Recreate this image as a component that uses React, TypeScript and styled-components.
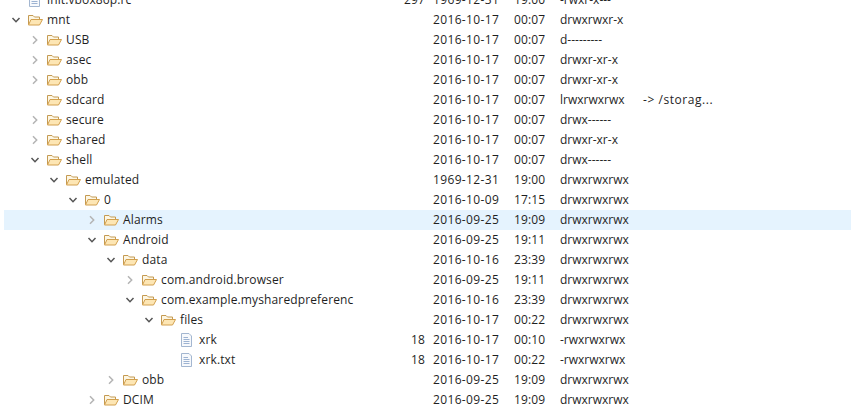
import styled, { createGlobalStyle } from 'styled-components';

const Global = createGlobalStyle`
  html, body { margin: 0; padding: 0; background: #fff; overflow: hidden; }
`;

const Tree = styled.div`
  width: 851px;
  height: 409px;
  overflow: hidden;
  font-family: "Open Sans", "Noto Sans", sans-serif;
  font-size: 12px;
  letter-spacing: 0.13px;
  color: #1f1f1f;
`;

const Rows = styled.div`
  margin-top: -10px;
  padding-left: 4px;
`;

const Row = styled.div<{ $selected?: boolean }>`
  display: grid;
  grid-template-columns: 390px 31px 8px 81px 46px 83px 1fr;
  box-sizing: border-box;
  height: 20px;
  padding-bottom: 2px;
  align-items: center;
  white-space: nowrap;
  background: ${p => (p.$selected ? '#e5f3fe' : 'transparent')};
`;

const NameCell = styled.div<{ $depth: number }>`
  display: flex;
  align-items: center;
  padding-left: ${p => 6 + p.$depth * 19}px;
`;

const Twisty = styled.span`
  width: 12px;
  height: 16px;
  margin: 2px 5px 0 0;
  display: flex;
  align-items: center;
  justify-content: center;
  flex-shrink: 0;
`;

const IconSlot = styled.span`
  width: 16px;
  height: 16px;
  margin: 2px 4px 0 0;
  flex-shrink: 0;
`;

const Size = styled.div`
  text-align: right;
`;

const DateCell = styled.div`
  letter-spacing: 0.35px;
`;

const PermCell = styled.div`
  letter-spacing: 0;
`;

const InfoCell = styled.div`
  letter-spacing: 0.55px;
`;

const Chevron = ({ open }: { open: boolean }) => (
  <svg width="10" height="10" viewBox="0 0 10 10" fill="none">
    {open ? (
      <path d="M1.5 3 L5 6.7 L8.5 3" stroke="#555" strokeWidth="1.5" />
    ) : (
      <path d="M3 1.3 L6.7 5 L3 8.7" stroke="#b4b4b4" strokeWidth="1.5" />
    )}
  </svg>
);

const FolderIcon = () => (
  <svg width="16" height="16" viewBox="0 0 16 16">
    <path d="M1.5 12.5 V3.5 H6 L7.5 5 H12.5 V7.5" fill="#fdf6e3" stroke="#c49a52" strokeWidth="1" />
    <path d="M1.5 13 L4 7.5 H15.5 L12.5 13 Z" fill="#fde6b4" stroke="#d2a04e" strokeWidth="1" strokeLinejoin="round" />
  </svg>
);

const FileIcon = () => (
  <svg width="16" height="16" viewBox="0 0 16 16">
    <path d="M2.5 1.5 H10 L12.5 4 V14.5 H2.5 Z" fill="#f7f9fc" stroke="#a3b6d0" strokeWidth="1" />
    <path d="M4.5 5.5 H9 M4.5 7.5 H10.5 M4.5 9.5 H10.5 M4.5 11.5 H10.5" stroke="#9db3d2" strokeWidth="1" />
  </svg>
);

type Node = {
  name: string;
  depth: number;
  size?: string;
  date: string;
  time: string;
  perm: string;
  info?: string;
  open?: boolean;
  leaf?: boolean;
  file?: boolean;
  selected?: boolean;
};

const nodes: Node[] = [
  { name: 'init.vbox86p.rc', depth: 0, size: '297', date: '1969-12-31', time: '19:00', perm: '-rwxr-x---', leaf: true, file: true },
  { name: 'mnt', depth: 0, date: '2016-10-17', time: '00:07', perm: 'drwxrwxr-x', open: true },
  { name: 'USB', depth: 1, date: '2016-10-17', time: '00:07', perm: 'd---------' },
  { name: 'asec', depth: 1, date: '2016-10-17', time: '00:07', perm: 'drwxr-xr-x' },
  { name: 'obb', depth: 1, date: '2016-10-17', time: '00:07', perm: 'drwxr-xr-x' },
  { name: 'sdcard', depth: 1, date: '2016-10-17', time: '00:07', perm: 'lrwxrwxrwx', info: '-> /storag...', leaf: true },
  { name: 'secure', depth: 1, date: '2016-10-17', time: '00:07', perm: 'drwx------' },
  { name: 'shared', depth: 1, date: '2016-10-17', time: '00:07', perm: 'drwxr-xr-x' },
  { name: 'shell', depth: 1, date: '2016-10-17', time: '00:07', perm: 'drwx------', open: true },
  { name: 'emulated', depth: 2, date: '1969-12-31', time: '19:00', perm: 'drwxrwxrwx', open: true },
  { name: '0', depth: 3, date: '2016-10-09', time: '17:15', perm: 'drwxrwxrwx', open: true },
  { name: 'Alarms', depth: 4, date: '2016-09-25', time: '19:09', perm: 'drwxrwxrwx', selected: true },
  { name: 'Android', depth: 4, date: '2016-09-25', time: '19:11', perm: 'drwxrwxrwx', open: true },
  { name: 'data', depth: 5, date: '2016-10-16', time: '23:39', perm: 'drwxrwxrwx', open: true },
  { name: 'com.android.browser', depth: 6, date: '2016-09-25', time: '19:11', perm: 'drwxrwxrwx' },
  { name: 'com.example.mysharedpreferenc', depth: 6, date: '2016-10-16', time: '23:39', perm: 'drwxrwxrwx', open: true },
  { name: 'files', depth: 7, date: '2016-10-17', time: '00:22', perm: 'drwxrwxrwx', open: true },
  { name: 'xrk', depth: 8, size: '18', date: '2016-10-17', time: '00:10', perm: '-rwxrwxrwx', leaf: true, file: true },
  { name: 'xrk.txt', depth: 8, size: '18', date: '2016-10-17', time: '00:22', perm: '-rwxrwxrwx', leaf: true, file: true },
  { name: 'obb', depth: 5, date: '2016-09-25', time: '19:09', perm: 'drwxrwxrwx' },
  { name: 'DCIM', depth: 4, date: '2016-09-25', time: '19:09', perm: 'drwxrwxrwx' },
];

export default function App() {
  return (
    <Tree>
      <Global />
      <Rows>
        {nodes.map(n => (
          <Row key={`${n.depth}-${n.name}-${n.date}`} $selected={n.selected}>
            <NameCell $depth={n.depth}>
              <Twisty>{!n.leaf && <Chevron open={!!n.open} />}</Twisty>
              <IconSlot>{n.file ? <FileIcon /> : <FolderIcon />}</IconSlot>
              <span>{n.name}</span>
            </NameCell>
            <Size>{n.size}</Size>
            <span />
            <DateCell>{n.date}</DateCell>
            <div>{n.time}</div>
            <PermCell>{n.perm}</PermCell>
            <InfoCell>{n.info}</InfoCell>
          </Row>
        ))}
      </Rows>
    </Tree>
  );
}
